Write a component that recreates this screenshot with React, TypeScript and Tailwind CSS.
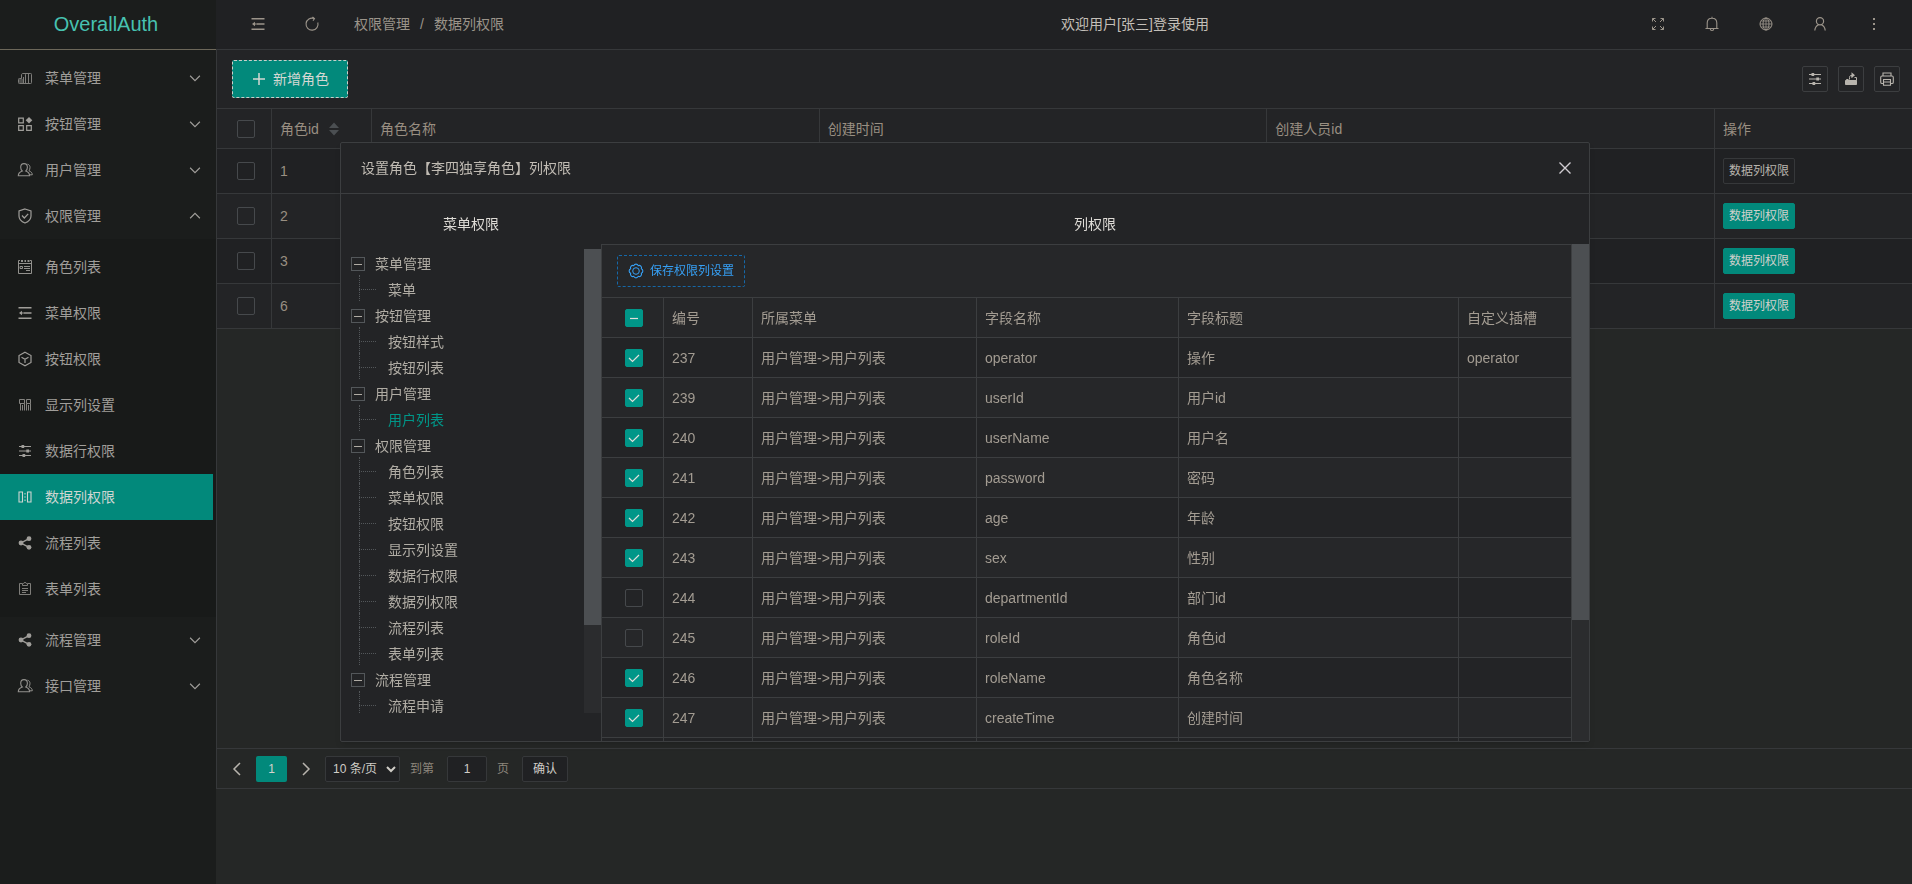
import { useState } from 'react';
import type { ReactNode } from 'react';
import clsx from 'clsx';

interface IconProps {
  className?: string;
  children: ReactNode;
}

function Icon({ className = 'h-4 w-4', children }: IconProps) {
  return (
    <svg
      viewBox="0 0 16 16"
      className={clsx('shrink-0', className)}
      fill="none"
      stroke="currentColor"
      strokeWidth="1"
      aria-hidden="true"
    >
      {children}
    </svg>
  );
}

const BuildingIcon = () => (
  <Icon className="h-4 w-4 opacity-75">
    <path d="M8.500 13.500V4.500C8.500 3.500 8 3.500 9 3.500H13.500C14.300 3.500 14.500 3.700 14.500 4.500V12.500C14.500 13.300 14.300 13.500 13.500 13.500H2.500C1.700 13.500 1.500 13.300 1.500 12.500V9.500C1.500 8.700 1.700 8.500 2.500 8.500H4.500V5C4.500 4 5 3.500 6 3.500H9M11.500 3.500V13.500M6.500 7V13.500" />
    <path fill="currentColor" fillOpacity="0.5" stroke="none" d="M2 9H6.500V13H2Z" />
  </Icon>
);

const AppsIcon = () => (
  <Icon>
    <path strokeWidth="1.2" d="M1.700 2.200H6.300V6.800H1.700ZM1.700 9.700H6.300V14.300H1.700ZM9.700 9.700H14.300V14.300H9.700Z" />
    <path fill="currentColor" stroke="none" d="M12 1 15.300 4.300 12 7.600 8.700 4.300Z" />
  </Icon>
);

const UsersIcon = () => (
  <Icon className="h-4 w-4 opacity-90">
    <path
      strokeWidth="1.1"
      d="M5.300 9C4 8 3.700 6.800 3.700 5.300C3.700 2.900 5 1.600 7 1.600S10.400 2.900 10.400 5.300C10.400 6.800 10 8 8.800 9C11 9.800 12.600 10.800 12.600 13.800H1.300C1.300 10.800 3 9.800 5.300 9Z"
    />
    <path d="M10.500 2.200C12.300 2.600 13 4 13 5.400C13 6.800 12.600 7.800 12 8.800C13.800 9.600 15.300 10.600 15.300 12.800H13" />
  </Icon>
);

const ShieldIcon = () => (
  <Icon>
    <path strokeWidth="1.2" d="M8 1 14 3V8C14 11.200 11.500 13.700 8 15 4.500 13.700 2 11.200 2 8V3ZM5 7.500 7.300 10 11.200 5.800" />
  </Icon>
);

const RoleListIcon = () => (
  <Icon className="h-4 w-4 opacity-90">
    <path d="M3 1.500H1.500V14.500H14.500V1.500H13" />
    <path strokeWidth="2" d="M4 2H6M7.500 2H9M10.500 2H12.500" />
    <path d="M2 4.500H14M3 7.500H5.500V9.500H3ZM7 7.500H13M7 9.500H13M9 11.500H13" />
  </Icon>
);

const IndentIcon = () => (
  <Icon>
    <path strokeWidth="1.4" d="M1.500 2.700H14.500M7 8H14.500M1.500 13.300H14.500" />
    <path fill="currentColor" stroke="none" d="M2 8 5 5.700V10.300Z" />
    <path d="M5 8H7" />
  </Icon>
);

const CubeIcon = () => (
  <Icon>
    <path strokeWidth="1.2" d="M8 1.200 14 4.500V11.500L8 14.800 2 11.500V4.500ZM4.500 6.200 8 8.200 11.500 6.200M8 8.200V12" />
  </Icon>
);

const ColumnsSetIcon = () => (
  <Icon className="h-4 w-4 opacity-80">
    <path d="M2.500 2.500H7.500V6.500H2.500ZM9.500 2.500H13.500V6.500H9.500Z" />
    <path d="M3.500 6.500V13.500M5.500 8V13.500M7.500 6.500V13.500M9.500 6.500V13.500M11.500 8V13.500M13.500 6.500V13.500" />
  </Icon>
);

const SlidersIcon = () => (
  <Icon>
    <path strokeWidth="1.2" d="M2 3.500H14M2 8H14M2 12.500H14" />
    <path strokeWidth="3" d="M4.500 3.500H7.200M9.300 8H12M5.500 12.500H8.200" />
  </Icon>
);

const DataColumnsIcon = () => (
  <Icon>
    <path strokeWidth="1.1" d="M2 3H5.500V13H2ZM10.500 3H14V13H10.500Z" />
    <path d="M8 4V5.500M8 7.300V8.700M8 10.500V12" />
  </Icon>
);

const ShareIcon = () => (
  <Icon>
    <path strokeWidth="1.4" d="M12 3.700 4 8 12 12.300" />
    <g fill="currentColor" stroke="none">
      <circle cx="12" cy="3.700" r="2.400" />
      <circle cx="4" cy="8" r="2.400" />
      <circle cx="12" cy="12.300" r="2.400" />
    </g>
  </Icon>
);

const FormIcon = () => (
  <Icon className="h-4 w-4 opacity-75">
    <path d="M5 2.500H2.500V13.500H13.500V2.500H11M5.500 4.500V2.500H6.500C6.500 1.200 9.500 1.200 9.500 2.500H10.500V4.500ZM5 7.500H11M5 9.500H11M5 11.500H9" />
  </Icon>
);

const ChevronIcon = ({ up = false }: { up?: boolean }) => (
  <Icon className="h-3 w-3">
    <path strokeWidth="1.5" d={up ? 'M1.500 11 8 4.500 14.500 11' : 'M1.500 5 8 11.500 14.500 5'} />
  </Icon>
);

const RefreshIcon = () => (
  <Icon>
    <path strokeWidth="1.1" d="M13.800 6.500A6 6 0 1 1 10 2.500M8.500 1 10.500 2.600 9 4.700" />
  </Icon>
);

const ExpandIcon = () => (
  <Icon>
    <path d="M2.500 5.500V2.500H5.500M2.500 2.500 6 6M10.500 2.500H13.500V5.500M13.500 2.500 10 6M2.500 10.500V13.500H5.500M2.500 13.500 6 10M10.500 13.500H13.500V10.500M13.500 13.500 10 10" />
  </Icon>
);

const BellIcon = () => (
  <Icon>
    <path strokeWidth="1.1" d="M1.500 12.500H14.500M3.200 12.500V7C3.200 4 5 2.200 8 2.200S12.800 4 12.800 7V12.500M8 .8V2.200M6.300 13C6.300 15 9.700 15 9.700 13" />
  </Icon>
);

const GlobeIcon = () => (
  <Icon>
    <circle cx="8" cy="8" r="6" />
    <ellipse cx="8" cy="8" rx="3" ry="6" />
    <path d="M8 2V14M2 8H14M3 5H13M3 11H13" strokeWidth="0.8" />
  </Icon>
);

const PersonIcon = () => (
  <Icon>
    <circle cx="8" cy="5.300" r="3.600" strokeWidth="1.2" />
    <path strokeWidth="1.2" d="M2.800 14.500C3 11.500 4.300 9.800 6.500 8.700M13.200 14.500C13 11.500 11.700 9.800 9.500 8.700" />
  </Icon>
);

const MoreIcon = () => (
  <Icon>
    <path strokeWidth="2" d="M8 2V4M8 7V9M8 12V14" />
  </Icon>
);

const ExportIcon = () => (
  <Icon>
    <path fill="currentColor" d="M2.500 9.500H13.500V13.500H2.500Z" />
    <path d="M5.500 8.500H3.500V9.500M11.500 6.500H13.500V9.500M6.500 8.500V6.500C6.500 5 7 4.500 9 4.500V6.500" />
    <path fill="currentColor" stroke="none" d="M8.500 1.300 12 4.300 8.500 7Z" />
  </Icon>
);

const PrintIcon = () => (
  <Icon>
    <path strokeWidth="1.1" d="M4 5V2H12V5M4 12.500H3C2.200 12.500 1.700 12 1.700 11.200V6.500C1.700 5.500 2.200 5 3 5H13C13.800 5 14.300 5.500 14.300 6.500V11.200C14.300 12 13.800 12.500 13 12.500H12M4.500 9V14.300H11.500V9" />
    <path strokeWidth="1.2" d="M4 8.500H12M5 11H11" />
  </Icon>
);

const GearIcon = () => (
  <Icon>
    <circle cx="8" cy="8" r="3.300" />
    <path
      strokeWidth="1.1"
      d="M13.360 5.780A2.400 2.400 0 0 1 13.360 10.220A2.400 2.400 0 0 1 10.220 13.360A2.400 2.400 0 0 1 5.780 13.360A2.400 2.400 0 0 1 2.640 10.220A2.400 2.400 0 0 1 2.640 5.780A2.400 2.400 0 0 1 5.780 2.640A2.400 2.400 0 0 1 10.220 2.640A2.400 2.400 0 0 1 13.360 5.780Z"
    />
  </Icon>
);

const subMenu = [
  { icon: RoleListIcon, label: '角色列表' },
  { icon: IndentIcon, label: '菜单权限' },
  { icon: CubeIcon, label: '按钮权限' },
  { icon: ColumnsSetIcon, label: '显示列设置' },
  { icon: SlidersIcon, label: '数据行权限' },
  { icon: DataColumnsIcon, label: '数据列权限' },
  { icon: ShareIcon, label: '流程列表' },
  { icon: FormIcon, label: '表单列表' },
];

const menu = [
  { icon: BuildingIcon, label: '菜单管理' },
  { icon: AppsIcon, label: '按钮管理' },
  { icon: UsersIcon, label: '用户管理' },
  { icon: ShieldIcon, label: '权限管理', children: subMenu },
  { icon: ShareIcon, label: '流程管理' },
  { icon: UsersIcon, label: '接口管理' },
];

const headerActions = [
  { icon: ExpandIcon, label: '全屏' },
  { icon: BellIcon, label: '消息' },
  { icon: GlobeIcon, label: '语言' },
  { icon: PersonIcon, label: '用户' },
  { icon: MoreIcon, label: '更多' },
];

const tableTools = [
  { icon: SlidersIcon, label: '筛选列' },
  { icon: ExportIcon, label: '导出' },
  { icon: PrintIcon, label: '打印' },
];

const roleIds = [1, 2, 3, 6];

const tree = [
  { label: '菜单管理', children: ['菜单'] },
  { label: '按钮管理', children: ['按钮样式', '按钮列表'] },
  { label: '用户管理', children: ['用户列表'] },
  {
    label: '权限管理',
    children: ['角色列表', '菜单权限', '按钮权限', '显示列设置', '数据行权限', '数据列权限', '流程列表', '表单列表'],
  },
  { label: '流程管理', children: ['流程申请'] },
];

const fields = [
  { id: 237, name: 'operator', title: '操作', slot: 'operator', checked: true },
  { id: 239, name: 'userId', title: '用户id', slot: '', checked: true },
  { id: 240, name: 'userName', title: '用户名', slot: '', checked: true },
  { id: 241, name: 'password', title: '密码', slot: '', checked: true },
  { id: 242, name: 'age', title: '年龄', slot: '', checked: true },
  { id: 243, name: 'sex', title: '性别', slot: '', checked: true },
  { id: 244, name: 'departmentId', title: '部门id', slot: '', checked: false },
  { id: 245, name: 'roleId', title: '角色id', slot: '', checked: false },
  { id: 246, name: 'roleName', title: '角色名称', slot: '', checked: true },
  { id: 247, name: 'createTime', title: '创建时间', slot: '', checked: true },
];

interface CheckboxProps {
  label: string;
  defaultChecked?: boolean;
  partial?: boolean;
}

function Checkbox({ label, defaultChecked = false, partial = false }: CheckboxProps) {
  return (
    <label className="grid h-[18px] w-[18px]">
      <input
        type="checkbox"
        aria-label={label}
        defaultChecked={defaultChecked}
        className="peer col-start-1 row-start-1 h-[18px] w-[18px] appearance-none rounded-xs border border-[#46494c] checked:border-[#009688] checked:bg-[#009688]"
      />
      <svg
        viewBox="0 0 18 18"
        className="pointer-events-none invisible col-start-1 row-start-1 h-[18px] w-[18px] text-[#e0deda] peer-checked:visible"
        fill="none"
        stroke="currentColor"
        strokeWidth="1.2"
        aria-hidden="true"
      >
        <path d={partial ? 'M5 9.500H13' : 'M4 9 7.500 12.500 14 6'} />
      </svg>
    </label>
  );
}

function Sidebar() {
  return (
    <aside className="flex w-[216px] shrink-0 flex-col bg-[#1b1d1c] text-[#a09e9a]">
      <div className="flex h-[50px] items-center justify-center border-b border-[#6c6759] pr-1 pb-[2px] text-xl text-[#47c2b1]">
        OverallAuth
      </div>
      <nav className="py-[5px]">
        {menu.map((item) => (
          <div key={item.label}>
            <button type="button" className="flex h-[46px] w-[213px] items-center pr-3 pl-[17px]">
              <item.icon />
              <span className="ml-3 flex-1 text-left">{item.label}</span>
              <ChevronIcon up={Boolean(item.children)} />
            </button>
            {item.children && (
              <div className="bg-[#181a19] py-[5px]">
                {item.children.map((child) => (
                  <a
                    key={child.label}
                    href="#"
                    className={clsx(
                      'flex h-[46px] w-[213px] items-center gap-3 pl-[17px]',
                      child.label === '数据列权限' && 'bg-[#02897b] text-[#cfd6d2]'
                    )}
                  >
                    <child.icon />
                    {child.label}
                  </a>
                ))}
              </div>
            )}
          </div>
        ))}
      </nav>
    </aside>
  );
}

function TopBar() {
  return (
    <header className="flex h-[50px] shrink-0 items-center justify-between border-b border-[#36383a] bg-[#202123] pb-[2px] text-[#9b948a]">
      <div className="flex flex-1 items-center pl-[34px]">
        <button type="button" aria-label="收起菜单">
          <IndentIcon />
        </button>
        <button type="button" aria-label="刷新" className="ml-[38px]">
          <RefreshIcon />
        </button>
        <nav className="ml-[34px] flex gap-[10px]">
          <a href="#">权限管理</a>
          <span>/</span>
          <a href="#">数据列权限</a>
        </nav>
      </div>
      <span className="pl-[138px] text-[#c3bfb8]">欢迎用户[张三]登录使用</span>
      <div className="flex flex-1 justify-end gap-[38px] pr-[30px]">
        {headerActions.map((action) => (
          <button key={action.label} type="button" aria-label={action.label}>
            <action.icon />
          </button>
        ))}
      </div>
    </header>
  );
}

function RoleTable() {
  return (
    <table className="w-full table-fixed border-separate border-spacing-0 text-left text-[#998f82] [&_td]:border-r [&_td]:border-b [&_td]:border-[#36383a] [&_td]:px-2 [&_td:first-child]:pl-5 [&_td:last-child]:border-r-0 [&_th]:border-r [&_th]:border-b [&_th]:border-[#36383a] [&_th]:px-2 [&_th]:font-normal [&_th:first-child]:pl-5 [&_th:last-child]:border-r-0">
      <colgroup>
        <col className="w-[55px]" />
        <col className="w-[100px]" />
        <col />
        <col />
        <col />
        <col className="w-[197px]" />
      </colgroup>
      <thead>
        <tr className="h-10 bg-[#232426]">
          <th>
            <Checkbox label="全选" />
          </th>
          <th>
            <span className="flex items-center gap-[10px]">
              角色id
              <svg viewBox="0 0 10 14" className="h-[14px] w-[10px]" fill="#4b4f52" aria-hidden="true">
                <path d="M5 .5 10 6H0ZM0 8H10L5 13.500Z" />
              </svg>
            </span>
          </th>
          <th>角色名称</th>
          <th>创建时间</th>
          <th>创建人员id</th>
          <th>操作</th>
        </tr>
      </thead>
      <tbody>
        {roleIds.map((id) => (
          <tr key={id} className="h-[45px] odd:bg-[#202123] even:bg-[#232426]">
            <td>
              <Checkbox label={`选择角色 ${id}`} />
            </td>
            <td>{id}</td>
            <td />
            <td />
            <td />
            <td>
              <button
                type="button"
                className={clsx(
                  'block h-[26px] w-[72px] rounded-xs border text-xs',
                  id === 1 ? 'border-[#36383a] text-[#b8b4ad]' : 'border-[#02897b] bg-[#02897b] text-[#cfd0cb]'
                )}
              >
                数据列权限
              </button>
            </td>
          </tr>
        ))}
      </tbody>
    </table>
  );
}

function Pagination() {
  return (
    <div className="flex h-[41px] shrink-0 items-center border-y border-[#36383a] text-xs text-[#8d867c]">
      <button type="button" aria-label="上一页" className="ml-[13px] text-[#b8b4ad]">
        <svg viewBox="0 0 14 14" className="h-[14px] w-[14px]" fill="none" stroke="currentColor" strokeWidth="1.5">
          <path d="M10 1 4 7 10 13" />
        </svg>
      </button>
      <button type="button" className="ml-3 h-[26px] w-[31px] rounded-xs bg-[#02897b] text-[#d5d3ce]">
        1
      </button>
      <button type="button" aria-label="下一页" className="ml-3 text-[#b8b4ad]">
        <svg viewBox="0 0 14 14" className="h-[14px] w-[14px]" fill="none" stroke="currentColor" strokeWidth="1.5">
          <path d="M4 1 10 7 4 13" />
        </svg>
      </button>
      <select
        aria-label="每页条数"
        className="ml-3 h-[26px] w-[75px] rounded-xs border border-[#36383a] bg-[#202123] pl-[3px] text-[#d0cdc7]"
      >
        <option>10 条/页</option>
        <option>20 条/页</option>
        <option>30 条/页</option>
      </select>
      <label htmlFor="page" className="ml-[10px]">
        到第
      </label>
      <input
        id="page"
        type="text"
        defaultValue="1"
        className="ml-[13px] h-[26px] w-10 rounded-xs border border-[#36383a] bg-[#202123] text-center text-[#d0cdc7]"
      />
      <span className="ml-[10px]">页</span>
      <button
        type="button"
        className="ml-[13px] h-[26px] w-[46px] rounded-xs border border-[#36383a] bg-[#202123] text-[#d0cdc7]"
      >
        确认
      </button>
    </div>
  );
}

function MenuTree() {
  const [selected, setSelected] = useState('用户列表');

  return (
    <ul className="min-w-0 flex-1 overflow-hidden pt-[2px] pl-[10px] text-[#b0aca4]">
      {tree.map((node) => (
        <li key={node.label}>
          <div className="flex h-[26px] items-center gap-[10px]">
            <button
              type="button"
              aria-label={`收起${node.label}`}
              className="flex h-[14px] w-[14px] items-center justify-center border border-[#53575a]"
            >
              <span className="h-px w-2 bg-[#b0aca4]" />
            </button>
            {node.label}
          </div>
          <ul>
            {node.children.map((child) => (
              <li key={child} className="relative flex h-[26px] items-center pl-[37px]">
                <span className="absolute -top-[2px] left-2 h-[26px] w-[17px] border-l border-dotted border-[#53575a]" />
                <span className="absolute top-3 left-2 w-[17px] border-t border-dotted border-[#53575a]" />
                <button
                  type="button"
                  onClick={() => setSelected(child)}
                  className={clsx(selected === child && 'text-[#009688]')}
                >
                  {child}
                </button>
              </li>
            ))}
          </ul>
        </li>
      ))}
    </ul>
  );
}

function FieldTable() {
  return (
    <table className="w-full table-fixed border-separate border-spacing-0 text-left text-[#a39c92] [&_td]:border-r [&_td]:border-b [&_td]:border-[#3c3e40] [&_td]:px-2 [&_td:first-child]:pl-[23px] [&_th]:border-r [&_th]:border-b [&_th]:border-[#3c3e40] [&_th]:px-2 [&_th]:font-normal [&_th:first-child]:pl-[23px]">
      <colgroup>
        <col className="w-[62px]" />
        <col className="w-[89px]" />
        <col className="w-[224px]" />
        <col className="w-[202px]" />
        <col className="w-[280px]" />
        <col />
      </colgroup>
      <thead>
        <tr className="h-10 bg-[#262729]">
          <th>
            <Checkbox label="全选" defaultChecked partial />
          </th>
          <th>编号</th>
          <th>所属菜单</th>
          <th>字段名称</th>
          <th>字段标题</th>
          <th>自定义插槽</th>
        </tr>
      </thead>
      <tbody>
        {fields.map((field) => (
          <tr key={field.id} className="h-10 odd:bg-[#232426] even:bg-[#262729]">
            <td>
              <Checkbox label={`选择字段 ${field.name}`} defaultChecked={field.checked} />
            </td>
            <td>{field.id}</td>
            <td>{'用户管理->用户列表'}</td>
            <td>{field.name}</td>
            <td>{field.title}</td>
            <td>{field.slot}</td>
          </tr>
        ))}
        <tr className="h-10 bg-[#232426]">
          <td />
          <td />
          <td />
          <td />
          <td />
          <td />
        </tr>
      </tbody>
    </table>
  );
}

function PermissionDialog() {
  return (
    <div className="fixed inset-0 flex items-center justify-center pl-[18px]">
      <section
        role="dialog"
        aria-labelledby="dialog-title"
        className="flex h-[600px] max-h-full w-[1250px] max-w-full flex-col rounded-xs border border-[#3c3e40] bg-[#232426] shadow-md"
      >
        <div className="flex h-[51px] shrink-0 items-center justify-between border-b border-[#3c3e40] pr-4 pl-5 text-[#c0bbb3]">
          <h2 id="dialog-title">设置角色【李四独享角色】列权限</h2>
          <button type="button" aria-label="关闭" className="text-[#d0cdd2]">
            <Icon>
              <path strokeWidth="1.4" d="M2.500 2.500 13.500 13.500M13.500 2.500 2.500 13.500" />
            </Icon>
          </button>
        </div>
        <div className="flex min-h-0 flex-1">
          <div className="flex w-[260px] shrink-0 flex-col">
            <h3 className="h-[50px] shrink-0 pt-5 text-center leading-5 text-[#dedbd6]">菜单权限</h3>
            <div className="mt-[5px] mb-7 flex min-h-0 flex-1">
              <MenuTree />
              <div className="w-[17px] bg-[#2b2c2e]">
                <div className="h-[376px] bg-[#4c4f52]" />
              </div>
            </div>
          </div>
          <div className="flex min-w-0 flex-1 flex-col">
            <h3 className="h-[50px] shrink-0 pt-5 text-center leading-5 text-[#dedbd6]">列权限</h3>
            <div className="flex min-h-0 flex-1">
              <div className="min-w-0 flex-1 overflow-hidden border-t border-l border-[#3c3e40]">
                <div className="flex h-[53px] items-center border-r border-b border-[#3c3e40] bg-[#262729] pl-[15px]">
                  <button
                    type="button"
                    className="flex h-8 w-32 items-center justify-center gap-[6px] rounded-xs border border-dashed border-[#1668a8] text-xs text-[#36a0f5]"
                  >
                    <GearIcon />
                    保存权限列设置
                  </button>
                </div>
                <FieldTable />
              </div>
              <div className="w-[17px] bg-[#2b2c2e]">
                <div className="h-[376px] bg-[#4c4f52]" />
              </div>
            </div>
          </div>
        </div>
      </section>
    </div>
  );
}

export default function App() {
  return (
    <div className="flex min-h-screen bg-[#252726] font-['Liberation_Sans','Noto_Sans_CJK_SC',sans-serif] text-sm">
      <Sidebar />
      <div className="flex min-w-0 flex-1 flex-col">
        <TopBar />
        <main className="flex flex-1 flex-col pb-[95px]">
          <div className="flex flex-1 flex-col border-l border-[#36383a]">
            <div className="flex h-[59px] shrink-0 items-center justify-between border-b border-[#36383a] bg-[#232426] pr-3 pl-[15px]">
              <button
                type="button"
                className="flex h-[38px] w-[116px] items-center justify-center gap-[6px] rounded-xs border border-dashed border-[#c9cfca] bg-[#02897b] text-[#d5d8d3]"
              >
                <Icon>
                  <path strokeWidth="1.5" d="M8 2V14M2 8H14" />
                </Icon>
                新增角色
              </button>
              <div className="flex gap-[10px] text-[#b8b4ad]">
                {tableTools.map((tool) => (
                  <button
                    key={tool.label}
                    type="button"
                    aria-label={tool.label}
                    className="flex h-[26px] w-[26px] items-center justify-center rounded-xs border border-[#3c3e40]"
                  >
                    <tool.icon />
                  </button>
                ))}
              </div>
            </div>
            <div className="flex-1">
              <RoleTable />
            </div>
            <Pagination />
          </div>
        </main>
      </div>
      <PermissionDialog />
    </div>
  );
}
